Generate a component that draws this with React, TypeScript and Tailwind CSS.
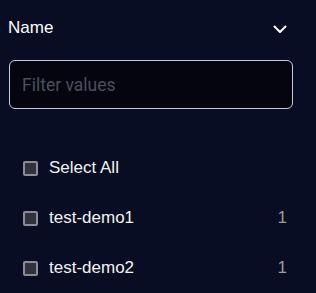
import { useState } from "react";

const items = [
  { label: "test-demo1", count: 1 },
  { label: "test-demo2", count: 1 },
];

function Box() {
  return (
    <span className="w-[15px] h-[15px] shrink-0 rounded-[2px] border-2 border-[#8c8c96] bg-[#32323c]" />
  );
}

export default function App() {
  const [q, setQ] = useState("");

  return (
    <div className="w-[316px] h-[293px] bg-[#090d23] overflow-hidden" style={{ fontFamily: '"Liberation Sans", Arial, sans-serif' }}>
      {/* Header */}
      <div className="flex items-center justify-between h-[56px] pl-2 pr-[29px]">
        <span className="text-[17px] text-white">Name</span>
        <svg width="14" height="9" viewBox="0 0 14 9" fill="none" className="mt-[2px]">
          <polyline points="1.5,1.5 7,7 12.5,1.5" stroke="#ffffff" strokeWidth="2" strokeLinecap="round" strokeLinejoin="round" />
        </svg>
      </div>

      {/* Filter input */}
      <div className="pl-[9px] pr-[23px] mt-[4px]">
        <input
          value={q}
          onChange={(e) => setQ(e.target.value)}
          placeholder="Filter values"
          className="w-full h-[49px] rounded-[6px] border border-[#c5cbe0] bg-[#04050f] px-[12px] text-[17.5px] text-white placeholder:text-[#4b4f5e] outline-none"
          style={{ fontFamily: "Roboto, sans-serif" }}
        />
      </div>

      {/* Values */}
      <div className="mt-[34px]">
        <div className="flex items-center h-[50px] pl-[23px] gap-[11px]">
          <Box />
          <span className="text-[17px] text-[#f2f2f2]">Select All</span>
        </div>
        {items.map((it) => (
          <div key={it.label} className="flex items-center h-[50px] pl-[23px] pr-[29px] gap-[11px]">
            <Box />
            <span className="text-[17px] text-[#f2f2f2] flex-1">{it.label}</span>
            <span className="text-[17px] text-[#9c9c9c]">{it.count}</span>
          </div>
        ))}
      </div>
    </div>
  );
}
